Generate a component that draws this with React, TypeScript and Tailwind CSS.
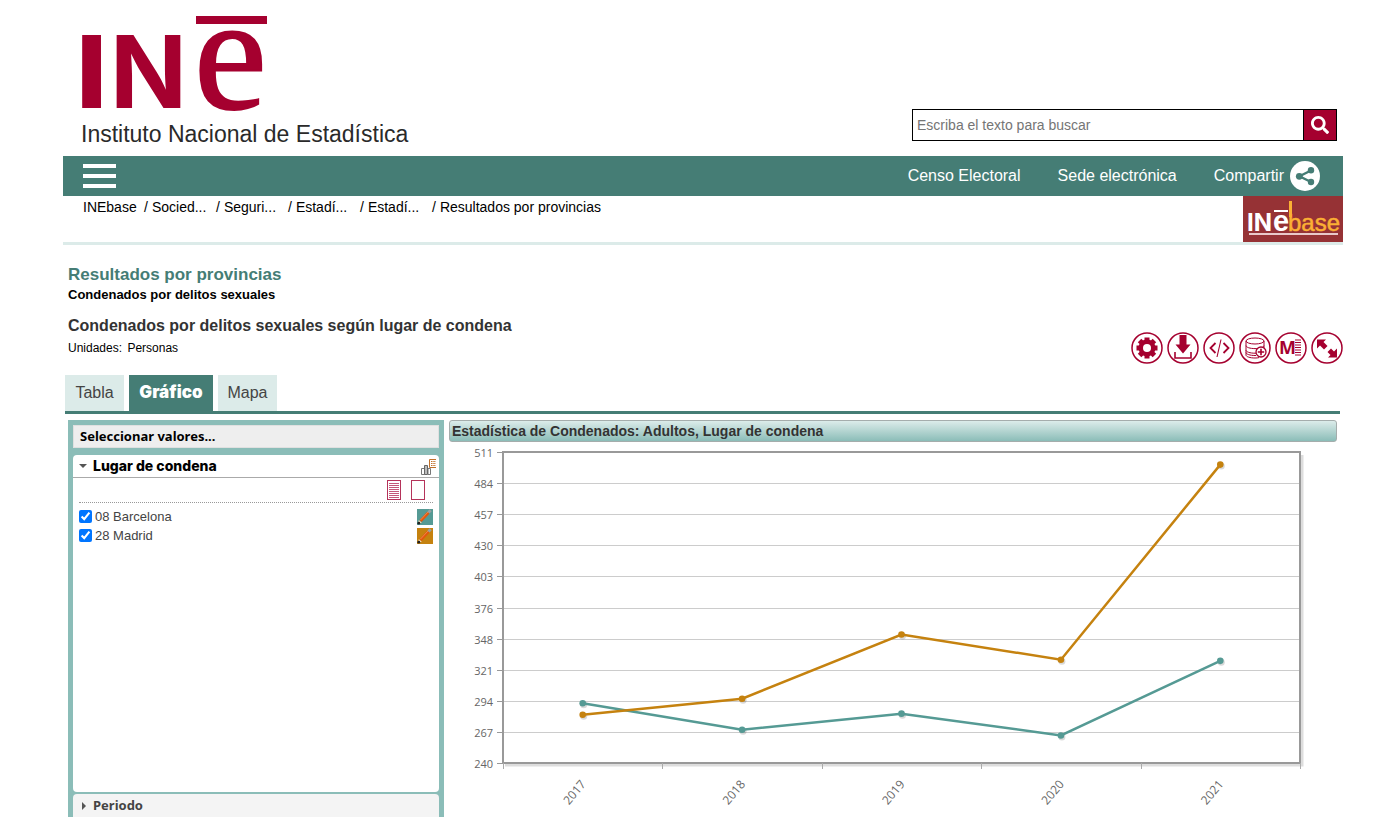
import React, { useState } from "react";
import { FaSearch } from "react-icons/fa";

const YEARS = ["2017", "2018", "2019", "2020", "2021"];
const Y_LABELS = [511, 484, 457, 430, 403, 376, 348, 321, 294, 267, 240];

const SERIES = [
  { id: "08", name: "08 Barcelona", color: "#559a94", values: [292, 269, 283, 264, 329] },
  { id: "28", name: "28 Madrid", color: "#c5820f", values: [282, 296, 352, 330, 500] },
];

function InstituteLogo() {
  return (
    <svg className="block h-[112px] w-[190px] overflow-visible" viewBox="81 0 190 112" fill="#a5002f" role="img" aria-label="INE">
      <text x="73" y="108" fontFamily="'DejaVu Sans', sans-serif" fontWeight="700" fontSize="100">I</text>
      <text x="110" y="108" fontFamily="Inter, sans-serif" fontWeight="700" fontSize="101">N</text>
      <text x="194" y="108" fontFamily="'Liberation Serif', serif" fontSize="164" stroke="#a5002f" strokeWidth="2">e</text>
      <rect x="196" y="16" width="71" height="8" />
    </svg>
  );
}

function InebaseLogo() {
  return (
    <svg className="block h-[46px] w-[100px]" viewBox="0 0 100 46" role="img" aria-label="INEbase">
      <rect width="100" height="46" fill="#963235" />
      <text x="4" y="35" fill="#fff" fontFamily="Inter, sans-serif" fontWeight="700" fontSize="24">IN</text>
      <text x="30" y="35" fill="#fff" fontFamily="'Liberation Sans', sans-serif" fontWeight="700" fontSize="29">e</text>
      <rect x="31" y="14" width="14" height="2" fill="#fff" />
      <text x="45" y="35" fill="#fbb034" fontFamily="'Liberation Sans', sans-serif" fontSize="24" stroke="#fbb034" strokeWidth=".5">base</text>
      <rect x="46" y="5" width="3" height="16" fill="#fbb034" />
      <rect x="6" y="37" width="89" height="2" fill="#e9c9ca" />
    </svg>
  );
}

function ShareIcon() {
  return (
    <svg className="size-[30px]" viewBox="0 0 30 30" aria-hidden="true">
      <circle cx="15" cy="15" r="15" fill="#fff" />
      <path d="M22 9 9.500 15.300 22 21.500" fill="none" stroke="#457d75" strokeWidth="2.400" />
      <circle cx="21" cy="9.300" r="3.200" fill="#457d75" />
      <circle cx="9.300" cy="15.300" r="3.400" fill="#457d75" />
      <circle cx="21" cy="21" r="3.200" fill="#457d75" />
    </svg>
  );
}

const RED = "#a5002f";

function Ring({ children }: { children: React.ReactNode }) {
  return (
    <svg className="block size-8" viewBox="0 0 32 32" fill="none" stroke={RED} aria-hidden="true">
      <circle cx="16" cy="16" r="15" strokeWidth="1.500" />
      {children}
    </svg>
  );
}

const TOOLS = [
  {
    label: "Configurar",
    icon: (
      <Ring>
        <g fill={RED} stroke="none">
          {[0, 45, 90, 135].map((a) => (
            <rect key={a} x="13.500" y="5.500" width="5" height="21" transform={`rotate(${a} 16 16)`} />
          ))}
          <circle cx="16" cy="16" r="8.500" />
          <circle cx="16" cy="16" r="4" fill="#fff" />
        </g>
      </Ring>
    ),
  },
  {
    label: "Descargar",
    icon: (
      <Ring>
        <path d="M12.500 3h7v9.500h4L16 21.500 8.500 12.500h4z" fill={RED} stroke="none" />
        <path d="M8 20v6h16v-6" strokeWidth="1.600" />
      </Ring>
    ),
  },
  {
    label: "Código",
    icon: (
      <Ring>
        <path d="M12.500 11 7.500 16l5 5M20.500 11l5 5-5 5" strokeWidth="1.800" />
        <path d="M18 7.500 14 25" strokeWidth="1.100" />
      </Ring>
    ),
  },
  {
    label: "Series",
    icon: (
      <Ring>
        <ellipse cx="16" cy="9" rx="9" ry="3" />
        <path d="M7 9v14c0 1.700 4 3 9 3 1.500 0 3-.1 4-.4M25 9v7M7 13.600c0 1.700 4 3 9 3s9-1.300 9-3M7 18.200c0 1.700 4 3 9 3h1M7 20.500c0 1.700 4 3 9 3h1" />
        <circle cx="22" cy="20" r="5" fill="#fff" strokeWidth="1.300" />
        <path d="M22 16.800v6.400M18.800 20h6.400" strokeWidth="1.600" />
      </Ring>
    ),
  },
  {
    label: "Metodología",
    icon: (
      <Ring>
        <text x="4" y="22" fill={RED} stroke="none" fontFamily="'Open Sans', sans-serif" fontWeight="700" fontSize="18">M</text>
        <path d="M20 8h6M20 10.500h6M20 13h6M20 15.500h6M20 18h6M20 20.500h6M20 23h6" strokeWidth="1" />
      </Ring>
    ),
  },
  {
    label: "Ampliar",
    icon: (
      <Ring>
        <path d="M6 7.500h9l-2.500 2.500 4 4-3.500 3.500-4-4-3 3zM26 25.500h-9l2.500-2.500-3-3 3.500-3.500 3 3 3-3z" fill={RED} stroke="none" />
      </Ring>
    ),
  },
];

function ChartTableIcon() {
  return (
    <svg className="h-[17px] w-4" viewBox="0 0 16 17" fill="none" aria-hidden="true">
      <path d="M1.500 10.500h3v6h-3zM8 10.500h2.500v6H8z" stroke="#777" fill="#fff" />
      <path d="M4.500 7.500h3v9h-3z" stroke="#666" fill="#bbb" />
      <path d="M16 1.500H9.500v8H16" stroke="#c0702a" />
      <path d="M11 3.500h5M11 5.500h5M11 7.500h5" stroke="#c0702a" strokeDasharray="1.500 .8" />
    </svg>
  );
}

function SheetIcon({ filled }: { filled: boolean }) {
  return (
    <svg className="block h-5 w-[14px]" viewBox="0 0 14 20" fill="#fff" stroke="#b5335a" aria-hidden="true">
      <rect x=".5" y=".5" width="13" height="19" />
      {filled && (
        <path d="M2 3.500h10M2 5.500h10M2 7.500h10M2 9.500h10M2 11.500h10M2 13.500h10M2 15.500h10M2 17.500h10" stroke="#c45878" />
      )}
    </svg>
  );
}

function PencilIcon({ color }: { color: string }) {
  return (
    <svg className="block size-4" viewBox="0 0 16 16" aria-hidden="true">
      <rect width="16" height="16" fill={color} />
      <path d="m3.500 12 8-8.500" stroke="#e2570c" strokeWidth="3" />
      <path d="m3.500 11 7.500-8" stroke="#f0935a" strokeWidth=".8" />
      <path d="m11.500 3.500 2.200-2.200" stroke="#9aa0a3" strokeWidth="3" />
      <path d="m1 15 .8-4 3 2.800z" fill="#f3d9b0" />
      <circle cx="1.800" cy="14.200" r="1.400" fill="#222" />
    </svg>
  );
}

function LineChart({ visible }: { visible: string[] }) {
  const left = 54;
  const top = 10;
  const width = 797;
  const height = 311;
  const step = width / YEARS.length;
  const px = (i: number) => left + step * (i + 0.5);
  const py = (v: number) => top + ((511 - v) / 271) * height;

  return (
    <svg className="block w-full" viewBox="0 0 888 375" role="img" aria-label="Condenados por delitos sexuales, 2017 a 2021">
      <path
        d={`M${left + 2} ${top + height + 2}H${left + width + 2}V${top + 3}`}
        stroke="#ddd"
        strokeWidth="3"
        fill="none"
      />
      {Y_LABELS.map((label, i) => {
        const y = Math.round(top + (height / 10) * i) + 0.5;
        return (
          <g key={label}>
            <path d={`M${left} ${y}H${left + width}`} stroke="#ccc" />
            <path d={`M${left - 6} ${y}H${left}`} stroke="#999" />
            <text x="44" y={y + 4} textAnchor="end" fill="#666" fontFamily="'Open Sans', sans-serif" fontSize="11">
              {label}
            </text>
          </g>
        );
      })}
      <rect x={left} y={top} width={width} height={height} fill="none" stroke="#999" strokeWidth="2" />
      {[0, 1, 2, 3, 4, 5].map((i) => (
        <path key={i} d={`M${Math.round(left + step * i) + 0.5} ${top + height}v6`} stroke="#aaa" />
      ))}
      {SERIES.filter((s) => visible.includes(s.id)).map((s) => (
        <g key={s.id}>
          {s.values.map((v, i) => (
            <circle key={i} cx={px(i) + 1} cy={py(v) + 1.5} r="3.500" fill="#000" opacity=".15" />
          ))}
          <path
            d={s.values.map((v, i) => `${i ? "L" : "M"}${px(i)} ${py(v)}`).join("")}
            fill="none"
            stroke={s.color}
            strokeWidth="2.500"
          />
          {s.values.map((v, i) => (
            <circle key={i} cx={px(i)} cy={py(v)} r="3.300" fill={s.color} />
          ))}
        </g>
      ))}
      {YEARS.map((year, i) => (
        <text
          key={year}
          textAnchor="middle"
          transform={`translate(${px(i) - 5} ${353}) rotate(-50)`}
          fill="#666"
          fontFamily="'Open Sans', sans-serif"
          fontSize="12"
        >
          {year}
        </text>
      ))}
    </svg>
  );
}

const CRUMBS = ["INEbase", "Socied...", "Seguri...", "Estadí...", "Estadí...", "Resultados por provincias"];
const TABS = ["Tabla", "Gráfico", "Mapa"];

export default function App() {
  const [visible, setVisible] = useState<string[]>(["08", "28"]);
  const toggle = (id: string) =>
    setVisible((v) => (v.includes(id) ? v.filter((x) => x !== id) : [...v, id]));

  return (
    <div className="bg-white pr-[57px] pl-[63px] font-['Liberation_Sans',Arial,sans-serif] text-black">
      <header>
        <div className="flex h-[156px] items-end justify-between pr-1.5 pl-[18px]">
          <a href="#inicio" className="pb-2">
            <InstituteLogo />
            <span className="block pt-2 text-[23px] leading-7 text-[#2a2a2a]">
              Instituto Nacional de Estadística
            </span>
          </a>
          <form className="mb-[15px] flex h-8 w-[425px] border border-black" onSubmit={(e) => e.preventDefault()}>
            <input
              type="search"
              aria-label="Escriba el texto para buscar"
              placeholder="Escriba el texto para buscar"
              className="min-w-0 flex-1 px-1 text-sm outline-none placeholder:text-[#757575]"
            />
            <button aria-label="Buscar" className="flex w-[33px] items-center justify-center border-l border-black bg-[#a5002f] text-white">
              <FaSearch className="size-[18px]" />
            </button>
          </form>
        </div>
        <nav className="flex h-10 items-center justify-between bg-[#457d75] pr-[23px] pl-5 text-white">
          <button aria-label="Menú" className="flex w-[33px] flex-col gap-1.5">
            <span className="h-1 bg-white" />
            <span className="h-1 bg-white" />
            <span className="h-1 bg-white" />
          </button>
          <div className="flex items-center gap-[37px]">
            <a href="#censo">Censo Electoral</a>
            <a href="#sede">Sede electrónica</a>
            <a href="#compartir" className="flex items-center gap-1.5">
              Compartir
              <ShareIcon />
            </a>
          </div>
        </nav>
        <div className="flex items-start justify-between border-b-[3px] border-[#dcebe9] pl-5">
          <ol className="flex pt-px text-sm leading-5">
            {CRUMBS.map((crumb, i) => (
              <li key={i} className={i === 0 ? "w-[61px]" : i < 5 ? "w-[72px]" : ""}>
                {i > 0 && <span className="mr-1">/</span>}
                <a href={`#nivel-${i}`}>{crumb}</a>
              </li>
            ))}
          </ol>
          <a href="#inebase">
            <InebaseLogo />
          </a>
        </div>
      </header>

      <main>
        <div className="flex items-end justify-between pt-[18px] pl-[5px]">
          <div>
            <h1 className="text-[17px] leading-6 font-bold text-[#457d75]">Resultados por provincias</h1>
            <h2 className="text-[13px] leading-4 font-bold">Condenados por delitos sexuales</h2>
            <h3 className="pt-[11px] text-base leading-6 font-bold text-[#333]">
              Condenados por delitos sexuales según lugar de condena
            </h3>
            <p className="text-xs leading-5">
              Unidades: <span className="ml-0.5">Personas</span>
            </p>
          </div>
          <div className="-mb-1.5 flex gap-1">
            {TOOLS.map((tool) => (
              <button key={tool.label} aria-label={tool.label}>
                {tool.icon}
              </button>
            ))}
          </div>
        </div>

        <div className="mt-[17px] mr-[3px] ml-0.5 flex gap-[5px] border-b-[3px] border-[#457d75]">
          {TABS.map((tab) => (
            <button
              key={tab}
              aria-pressed={tab === "Gráfico"}
              className={
                tab === "Gráfico"
                  ? "h-9 w-[84px] bg-[#457d75] font-['Inter',sans-serif] text-[17px] font-black text-white"
                  : "h-9 w-[59px] bg-[#dcebe9] text-base text-[#444]"
              }
            >
              {tab}
            </button>
          ))}
        </div>

        <div className="flex items-start gap-[5px] pt-1.5 pr-1.5 pl-[5px]">
          <aside className="w-[376px] shrink-0 bg-[#8bbdb8] px-[5px] pt-[5px]">
            <h4 className="border border-[#e0e0e0] bg-[#eee] pl-1.5 font-['Noto_Sans',sans-serif] text-[13px] leading-[21px] font-bold">
              Seleccionar valores...
            </h4>
            <section className="mt-[7px] rounded bg-white">
              <div className="flex h-[23px] items-center justify-between border-b border-[#aaa] pr-[3px] pl-1.5">
                <button className="flex items-center gap-1.5 font-['Inter',sans-serif] text-sm font-extrabold">
                  <svg className="h-1 w-2" viewBox="0 0 8 4" fill="#555" aria-hidden="true">
                    <path d="M0 0h8L4 4z" />
                  </svg>
                  Lugar de condena
                </button>
                <button aria-label="Gráfico y tabla">
                  <ChartTableIcon />
                </button>
              </div>
              <div className="min-h-[314px] px-1.5">
                <div className="flex h-[25px] items-center justify-end gap-2.5 border-b border-dotted border-[#999] pr-2">
                  <button aria-label="Seleccionar todos">
                    <SheetIcon filled />
                  </button>
                  <button aria-label="Quitar selección">
                    <SheetIcon filled={false} />
                  </button>
                </div>
                <ul className="pt-1">
                  {SERIES.map((s) => (
                    <li key={s.id} className="flex h-[19px] items-center justify-between">
                      <label className="flex items-center gap-[3px] text-[13px] text-[#444]">
                        <input
                          type="checkbox"
                          checked={visible.includes(s.id)}
                          onChange={() => toggle(s.id)}
                          className="size-[13px]"
                        />
                        {s.name}
                      </label>
                      <button aria-label={`Color de ${s.name}`}>
                        <PencilIcon color={s.color} />
                      </button>
                    </li>
                  ))}
                </ul>
              </div>
            </section>
            <section className="mt-0.5 rounded-t bg-[#f4f4f4] pl-2">
              <button className="flex h-6 items-center gap-1.5 font-['Noto_Sans',sans-serif] text-[13px] font-bold text-[#444]">
                <svg className="h-2 w-1.5" viewBox="0 0 6 8" fill="#555" aria-hidden="true">
                  <path d="M1 0v8l4-4z" />
                </svg>
                Periodo
              </button>
            </section>
          </aside>

          <section className="min-w-0 flex-1">
            <h4 className="h-[22px] rounded-[3px] border border-[#a5adac] bg-linear-to-b from-[#dcecea] to-[#8bbdb8] pl-0.5 text-sm leading-5 font-bold text-[#333]">
              Estadística de Condenados: Adultos, Lugar de condena
            </h4>
            <LineChart visible={visible} />
          </section>
        </div>
      </main>
    </div>
  );
}
